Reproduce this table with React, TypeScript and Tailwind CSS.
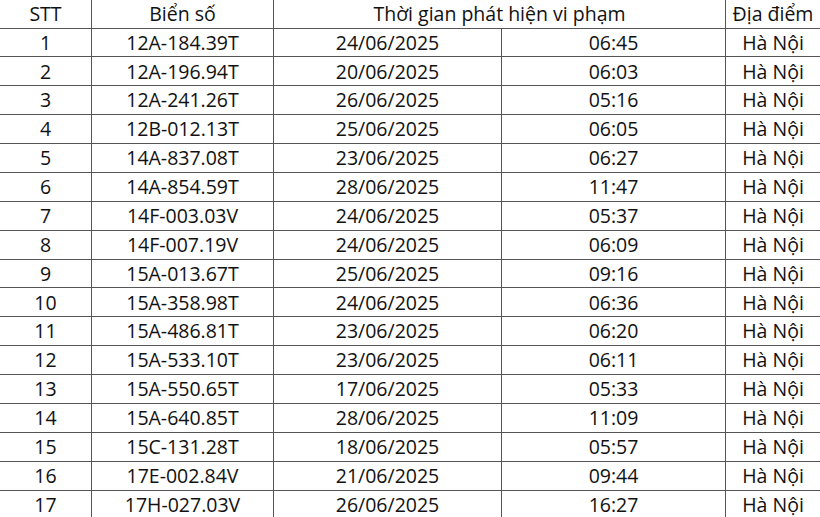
import React from "react";

const rows: [string, string, string][] = [
  ["12A-184.39T", "24/06/2025", "06:45"],
  ["12A-196.94T", "20/06/2025", "06:03"],
  ["12A-241.26T", "26/06/2025", "05:16"],
  ["12B-012.13T", "25/06/2025", "06:05"],
  ["14A-837.08T", "23/06/2025", "06:27"],
  ["14A-854.59T", "28/06/2025", "11:47"],
  ["14F-003.03V", "24/06/2025", "05:37"],
  ["14F-007.19V", "24/06/2025", "06:09"],
  ["15A-013.67T", "25/06/2025", "09:16"],
  ["15A-358.98T", "24/06/2025", "06:36"],
  ["15A-486.81T", "23/06/2025", "06:20"],
  ["15A-533.10T", "23/06/2025", "06:11"],
  ["15A-550.65T", "17/06/2025", "05:33"],
  ["15A-640.85T", "28/06/2025", "11:09"],
  ["15C-131.28T", "18/06/2025", "05:57"],
  ["17E-002.84V", "21/06/2025", "09:44"],
  ["17H-027.03V", "26/06/2025", "16:27"],
];

const cols = "grid grid-cols-[92px_182px_228px_224px_1fr]";
const cell = "flex items-center justify-center border-r border-[#555]";

export default function App() {
  return (
    <div
      className="w-[820px] h-[517px] overflow-hidden bg-white text-[#111] text-[19.5px] leading-none"
      style={{ fontFamily: '"Open Sans", "Noto Sans", sans-serif' }}
    >
      {/* header */}
      <div className={`${cols} h-[28.5px] border-b border-[#555]`}>
        <div className={cell}>STT</div>
        <div className={cell}>Biển số</div>
        <div className={`${cell} col-span-2`}>Thời gian phát hiện vi phạm</div>
        <div className="flex items-center justify-center">Địa điểm</div>
      </div>

      {rows.map(([plate, date, time], i) => (
        <div key={plate} className={`${cols} h-[28.875px] border-b border-[#555]`}>
          <div className={cell}>{i + 1}</div>
          <div className={cell}>{plate}</div>
          <div className={cell}>{date}</div>
          <div className={cell}>{time}</div>
          <div className="flex items-center justify-center">Hà Nội</div>
        </div>
      ))}
    </div>
  );
}
